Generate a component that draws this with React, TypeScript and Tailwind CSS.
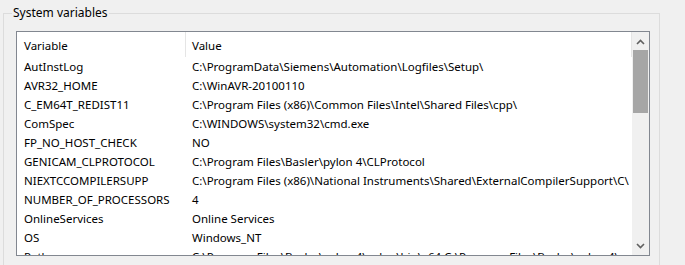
import React from 'react';

const rows: [string, string][] = [
  ['AutInstLog', 'C:\\ProgramData\\Siemens\\Automation\\Logfiles\\Setup\\'],
  ['AVR32_HOME', 'C:\\WinAVR-20100110'],
  ['C_EM64T_REDIST11', 'C:\\Program Files (x86)\\Common Files\\Intel\\Shared Files\\cpp\\'],
  ['ComSpec', 'C:\\WINDOWS\\system32\\cmd.exe'],
  ['FP_NO_HOST_CHECK', 'NO'],
  ['GENICAM_CLPROTOCOL', 'C:\\Program Files\\Basler\\pylon 4\\CLProtocol'],
  ['NIEXTCCOMPILERSUPP', 'C:\\Program Files (x86)\\National Instruments\\Shared\\ExternalCompilerSupport\\C\\'],
  ['NUMBER_OF_PROCESSORS', '4'],
  ['OnlineServices', 'Online Services'],
  ['OS', 'Windows_NT'],
  ['Path', 'C:\\Program Files\\Basler\\pylon 4\\pylon\\bin\\x64;C:\\Program Files\\Basler\\pylon 4\\'],
];

const Chevron = ({ down }: { down?: boolean }) => (
  <svg width="9" height="6" viewBox="0 0 9 6" className={down ? 'rotate-180' : ''}>
    <path d="M1 5 L4.5 1.5 L8 5" fill="none" stroke="#606060" strokeWidth="1.6" />
  </svg>
);

export default function App() {
  return (
    <div className="w-[685px] h-[265px] bg-[#f0f0f0] overflow-hidden text-[11.5px] text-black" style={{ fontFamily: '"Noto Sans", sans-serif' }}>
      <fieldset className="ml-[3px] mt-[5px] w-[657px] h-[300px] border border-[#dcdcdc]">
        <legend className="ml-[8px] px-[1px] leading-[16px] text-[12px]">System variables</legend>
        <div className="ml-[12px] mt-[10px] w-[634px] h-[225px] border border-[#828790] bg-white flex">
          <div className="flex-1 overflow-hidden">
            <div className="flex h-[25px] items-center">
              <div className="w-[169px] h-full pl-[7px] flex items-center border-r border-[#e5e5e5] pt-[2px]">Variable</div>
              <div className="flex-1 h-full pl-[6px] flex items-center border-r border-[#e5e5e5] pt-[2px]">Value</div>
            </div>
            {rows.map(([k, v]) => (
              <div key={k} className="flex h-[19px] items-center whitespace-nowrap">
                <div className="w-[169px] pl-[7px] shrink-0">{k}</div>
                <div className="pl-[6px]">{v}</div>
              </div>
            ))}
          </div>
          <div className="w-[17px] h-full bg-[#f0f0f0] flex flex-col items-center">
            <div className="h-[17px] w-full flex items-center justify-center pt-[3px]">
              <Chevron />
            </div>
            <div className="mt-[1px] w-[15px] h-[63px] bg-[#a6a6a6]" />
            <div className="flex-1" />
            <div className="h-[17px] w-full flex items-center justify-center pb-[2px]">
              <Chevron down />
            </div>
          </div>
        </div>
      </fieldset>
    </div>
  );
}
